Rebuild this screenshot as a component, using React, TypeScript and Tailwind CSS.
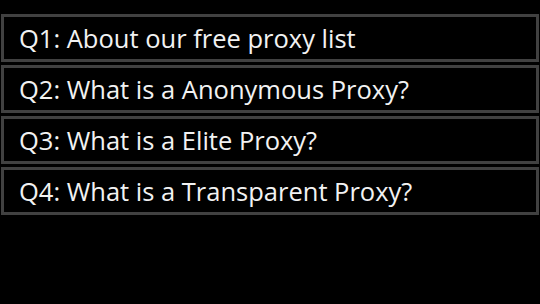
const questions = [
  'Q1: About our free proxy list',
  'Q2: What is a Anonymous Proxy?',
  'Q3: What is a Elite Proxy?',
  'Q4: What is a Transparent Proxy?',
]

export default function App() {
  return (
    <div className="h-[304px] w-full overflow-hidden bg-black pt-[14px] px-[1px] font-['Open_Sans',sans-serif] text-[#f2f2f2]">
      <div className="flex flex-col gap-[3px]">
        {questions.map((q) => (
          <div
            key={q}
            className="flex h-[48px] items-center border-[3px] border-[#414141] pl-[15px] pt-[2px] text-[25.5px] leading-none"
          >
            {q}
          </div>
        ))}
      </div>
    </div>
  )
}
